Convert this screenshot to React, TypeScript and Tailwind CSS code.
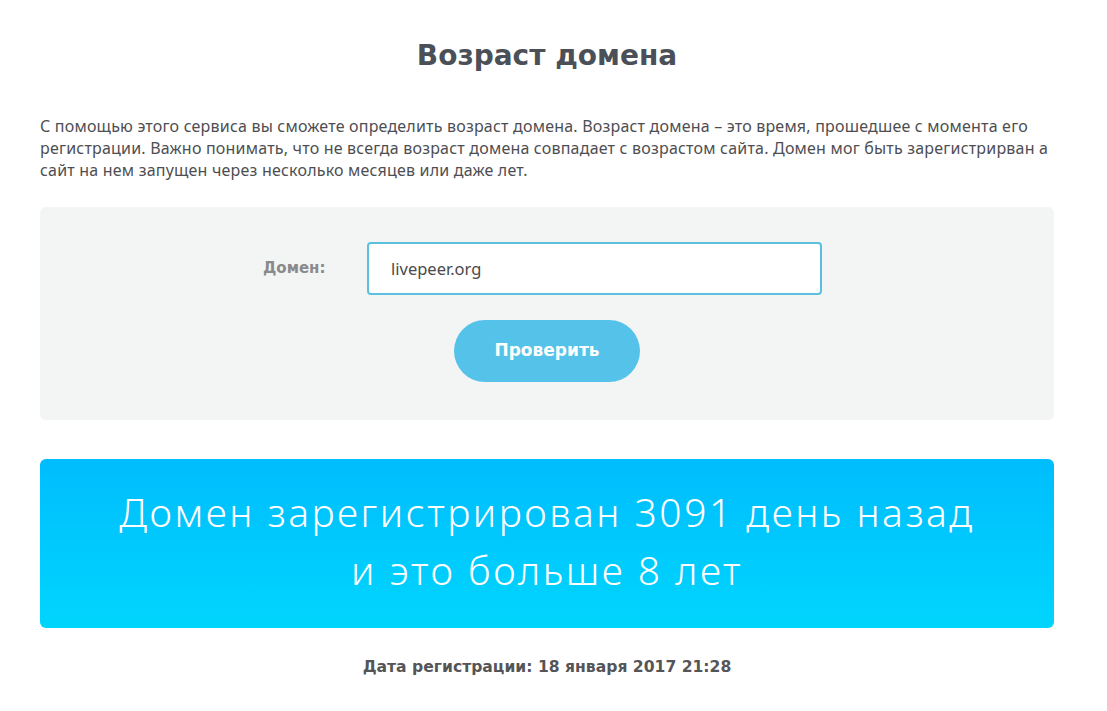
export default function App() {
  return (
    <div className="min-h-screen bg-white font-['Noto_Sans',sans-serif]">
      <div className="ml-[40px] w-[1014px] pt-[38px] pb-10">
        <h1 className="text-center font-['DejaVu_Sans',sans-serif] text-[28px] font-bold leading-[36px] text-[#4b5058]">
          Возраст домена
        </h1>

        <p className="mt-[41px] text-[16px] leading-[22px] tracking-[0.2px] text-[#4e4e52]">
          С помощью этого сервиса вы сможете определить возраст домена. Возраст домена – это время, прошедшее с момента его
          <br />
          регистрации. Важно понимать, что не всегда возраст домена совпадает с возрастом сайта. Домен мог быть зарегистрирван а
          <br />
          сайт на нем запущен через несколько месяцев или даже лет.
        </p>

        <form className="mt-[26px] flex flex-col rounded-md bg-[#f3f5f5] pt-[35px] pb-[38px]">
          <div className="ml-[223px] flex items-center">
            <label className="w-[104px] font-['DejaVu_Sans',sans-serif] text-[15px] font-bold text-[#8a8a8a]">Домен:</label>
            <input
              defaultValue="livepeer.org"
              className="h-[53px] w-[455px] rounded-[4px] border-2 border-[#5bc0e0] bg-white px-[22px] text-[16.5px] text-[#4a4a4a] outline-none"
            />
          </div>
          <button
            type="button"
            className="mx-auto mt-[25px] h-[62px] w-[186px] rounded-full bg-[#55c2ea] font-['DejaVu_Sans',sans-serif] text-[17px] font-bold text-white"
          >
            Проверить
          </button>
        </form>

        {/* result banner */}
        <div className="mt-[39px] flex h-[169px] flex-col items-center justify-center rounded-md bg-gradient-to-b from-[#00bdfd] to-[#00d5fd] pb-[5px] text-center text-[39px] font-light leading-[58px] tracking-[2.5px] text-white">
          <div>Домен зарегистрирован 3091 день назад</div>
          <div>и это больше 8 лет</div>
        </div>

        <p className="mt-[28px] text-center font-['DejaVu_Sans',sans-serif] text-[15.6px] font-bold text-[#555558]">
          Дата регистрации: 18 января 2017 21:28
        </p>
      </div>
    </div>
  );
}
